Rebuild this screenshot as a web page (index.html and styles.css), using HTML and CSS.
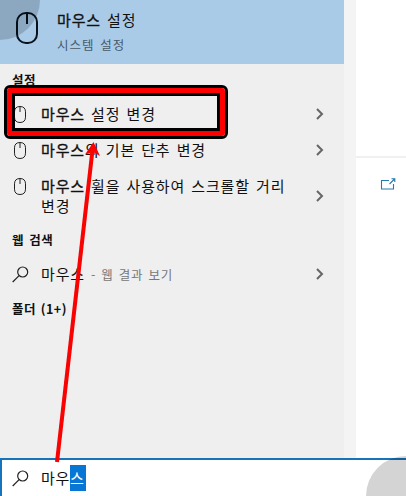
FILE: index.html
```html
<!DOCTYPE html>
<html lang="ko">
<head>
<meta charset="utf-8">
<title>마우스 설정</title>
<link rel="stylesheet" href="styles.css">
</head>
<body>
<svg class="defs" aria-hidden="true">
  <symbol id="mouse" viewBox="0 0 12 17"><path d="M.5 5.8C.5 2.5 2.3.5 6 .5s5.500 2 5.500 5.300v5.400c0 3.300-1.800 5.300-5.500 5.300S.5 14.500.5 11.200zM6 .5V6"/></symbol>
  <symbol id="search" viewBox="0 0 17 17"><circle cx="10.700" cy="6" r="5"/><path d="M7.100 9.600.7 16"/></symbol>
  <symbol id="chevron" viewBox="0 0 8 12"><path d="M1 1l5 5-5 5"/></symbol>
</svg>
<div class="screen">
  <main class="top">
    <section class="results">
      <div class="best">
        <svg class="best-icon" viewBox="0 0 22 32"><rect x="1" y="1" width="20" height="30" rx="9"/><path d="M11 1v11"/></svg>
        <div>
          <div class="best-title"><span class="match">마우스</span> 설정</div>
          <div class="best-sub">시스템 설정</div>
        </div>
      </div>
      <h2 class="first-heading">설정</h2>
      <div class="row row-change"><svg class="mouse"><use href="#mouse"/></svg><p><span class="match">마우스</span> 설정 변경</p><svg class="chevron"><use href="#chevron"/></svg></div>
      <div class="row"><svg class="mouse"><use href="#mouse"/></svg><p><span class="match">마우스</span>의 기본 단추 변경</p><svg class="chevron"><use href="#chevron"/></svg></div>
      <div class="row tall"><svg class="mouse"><use href="#mouse"/></svg><p><span class="match">마우스</span> 휠을 사용하여 스크롤할 거리<br>변경</p><svg class="chevron"><use href="#chevron"/></svg></div>
      <h2 class="web-heading">웹 검색</h2>
      <div class="row web"><svg class="search"><use href="#search"/></svg><p>마우스 <span class="hint">- 웹 결과 보기</span></p><svg class="chevron"><use href="#chevron"/></svg></div>
      <h2 class="folder-heading">폴더 (1+)</h2>
    </section>
    <aside class="detail">
      <div class="detail-head"></div>
      <svg class="open" viewBox="0 0 16 12"><path d="M9 2.500H1.500v8.500h12V6M9.500 6l5-5M11.500.7h3.300V4"/></svg>
    </aside>
  </main>
  <div class="searchbar"><svg class="search"><use href="#search"/></svg><div class="query">마우<span class="selected">스</span></div></div>
  <div class="dot dot-start"></div>
  <div class="dot dot-end"></div>
  <div class="frame"><div class="frame-mid"><div class="frame-inner"></div></div></div>
  <svg class="arrow" viewBox="0 0 406 496"><path class="shaft" d="M57 462 92.500 150"/><path class="head" d="M93.500 142 100 156 93 152 85 154.500z"/></svg>
</div>
</body>
</html>
```
FILE: styles.css
```css
* { box-sizing: border-box; }
body { margin: 0; font-family: "Noto Sans CJK KR", sans-serif; color: #111; }
p, h2 { margin: 0; }
svg { display: block; fill: none; stroke: #222; flex: none; overflow: visible; }
.defs { position: absolute; width: 0; height: 0; }
.screen { position: relative; width: 406px; height: 496px; overflow: hidden; background: #fff; display: flex; flex-direction: column; }
.top { height: 458px; display: flex; background: #f4f4f4; }
.results { width: 344px; background: #efefef; }
.best { height: 64px; background: #a9cbe8; display: flex; padding: 8px 0 0 16px; gap: 19px; }
.best-icon { width: 22px; height: 32px; margin-top: 4px; stroke: #08121c; stroke-width: 2; }
.best-title { font-size: 15px; line-height: 24px; letter-spacing: .85px; word-spacing: 1px; }
.best-sub { font-size: 12.5px; line-height: 25px; letter-spacing: .95px; word-spacing: 1.5px; color: #48596a; }
.match { -webkit-text-stroke: .3px #111; }
h2 { padding-left: 12px; font-size: 12.5px; line-height: 20px; font-weight: 700; letter-spacing: .6px; word-spacing: 1px; white-space: nowrap; }
.first-heading { margin-top: 6px; }
.row { display: flex; align-items: center; padding: 0 20px 0 14px; height: 36px; font-size: 15px; line-height: 20px; letter-spacing: .85px; word-spacing: 1.1px; white-space: nowrap; }
.row p { flex: 1; margin-left: 15px; }
.row-change { margin-top: 6px; }
.tall { height: 56px; }
.tall .mouse { align-self: flex-start; margin-top: 10px; }
.mouse { width: 12px; height: 17px; }
.chevron { width: 8px; height: 12px; stroke: #666; stroke-width: 2; }
.search { width: 17px; height: 17px; stroke-width: 1.2; }
.web-heading { margin-top: 6px; }
.web { margin-top: 6px; padding-left: 12px; }
.web p { margin-left: 12px; }
.hint { font-size: 12.5px; color: #777; letter-spacing: .8px; word-spacing: .8px; }
.folder-heading { margin-top: 7px; letter-spacing: .45px; }
.detail { width: 50px; margin-left: 12px; background: #fff; }
.detail-head { height: 158px; border-bottom: 2px solid #f0f0f0; }
.open { width: 16px; height: 12px; margin: 20px 0 0 24px; stroke: #2879ad; stroke-width: 1.1; }
.searchbar { height: 38px; border-top: 2px solid #1874ba; border-left: 2px solid #1874ba; display: flex; align-items: center; padding: 0 0 0 10px; gap: 12px; }
.query { display: flex; font-size: 15px; line-height: 26px; letter-spacing: .75px; }
.selected { width: 16px; background: #0876d4; color: #fff; }
.dot { position: absolute; width: 80px; height: 80px; border-radius: 50%; background: rgba(0, 0, 0, .17); }
.dot-start { left: -40px; top: -40px; }
.dot-end { left: 366px; top: 456px; }
.frame { position: absolute; left: 4px; top: 85px; width: 224px; height: 54px; border: 3px solid #000; border-radius: 6px; }
.frame-mid { height: 100%; border: 5px solid #f00; border-radius: 3px; }
.frame-inner { height: 100%; border: 3px solid #000; }
.arrow { position: absolute; left: 0; top: 0; width: 406px; height: 496px; }
.shaft { stroke: #f80202; stroke-width: 4; }
.head { fill: #f80202; stroke: none; }
```
